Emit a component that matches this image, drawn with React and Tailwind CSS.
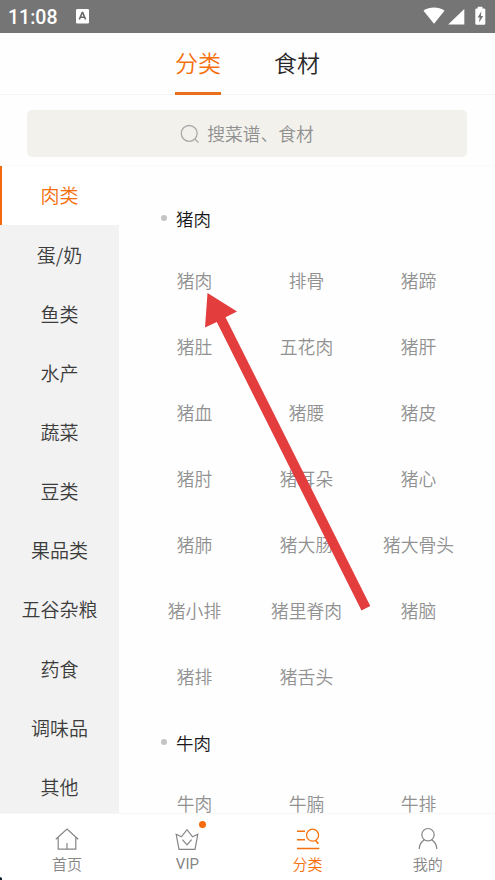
const CATEGORIES = ['肉类', '蛋/奶', '鱼类', '水产', '蔬菜', '豆类', '果品类', '五谷杂粮', '药食', '调味品', '其他'];

const SECTIONS = [
  {
    title: '猪肉',
    items: ['猪肉', '排骨', '猪蹄', '猪肚', '五花肉', '猪肝', '猪血', '猪腰', '猪皮', '猪肘', '猪耳朵', '猪心', '猪肺', '猪大肠', '猪大骨头', '猪小排', '猪里脊肉', '猪脑', '猪排', '猪舌头'],
  },
  { title: '牛肉', items: ['牛肉', '牛腩', '牛排'] },
];

function StatusBar() {
  return (
    <header className="flex h-[33px] shrink-0 items-center bg-[#757575] pl-[8px] pr-[8px] text-white">
      <span className="w-[68px] pt-[2px] font-[Roboto] text-[19.5px] font-medium leading-none">11:08</span>
      <svg width="13" height="15" viewBox="0 0 13 15">
        <rect width="13" height="14.5" rx="1.2" fill="white" />
        <path d="M3.3 10.5 6.2 3.5h.5l2.9 7M4.4 8.3h4.2" fill="none" stroke="#666" strokeWidth="1.6" />
      </svg>
      <svg className="-mt-[1px] ml-auto" width="64" height="20" viewBox="0 0 64 20">
        <path d="M.5 4.7C6.5.4 15.5.4 21.5 4.7L11 17.7Z" fill="white" />
        <path d="M41.3 3v15.5H25.2Z" fill="white" />
        <path d="M54.7 2.4V.8h4.8v1.6h1.6q1.2 0 1.2 1.2v14q0 1.2-1.2 1.2h-7.6q-1.2 0-1.2-1.2v-14q0-1.2 1.2-1.2Z" fill="white" />
        <path d="M58.4 5.3 54.6 11.5h2.1l-.7 5 4.2-6.6h-2.3Z" fill="#757575" />
      </svg>
    </header>
  );
}

function Tabs() {
  return (
    <nav className="flex h-[62px] shrink-0 justify-center gap-[53px] border-b border-[#f4f4f4] text-[23px] leading-none text-[#282828]">
      <button className="-mb-px flex h-[62px] w-[46px] items-center justify-center border-b-[3px] border-[#e9701a] pb-px whitespace-nowrap text-[#f5700c]">分类</button>
      <button className="-mb-px flex h-[62px] w-[46px] items-center justify-center border-b-[3px] border-transparent pb-px whitespace-nowrap">食材</button>
    </nav>
  );
}

function Search() {
  return (
    <div className="flex h-[71px] shrink-0 items-start border-b border-[#fafafa] px-[27px] pt-[15px]">
      <div className="flex h-[47px] w-[440px] items-center justify-center gap-[7px] rounded-[5px] bg-[#f2f1ec] text-[17.8px] leading-none text-[#8f8f8f]">
        <svg width="20" height="20" viewBox="0 0 20 20" fill="none" stroke="#aaa" strokeWidth="1.3">
          <circle cx="9.2" cy="9.4" r="7.9" />
          <path d="m15 15.2 3.5 3.2" />
        </svg>
        <span>搜菜谱、食材</span>
      </div>
    </div>
  );
}

function Sidebar() {
  return (
    <aside className="flex w-[119px] shrink-0 flex-col bg-[#f2f2f2] text-[19px] leading-none">
      {CATEGORIES.map((name, i) => (
        <div
          key={name}
          className={
            i === 0
              ? 'flex h-[59.15px] shrink-0 items-center justify-center border-l-2 border-[#f56a0c] bg-white pb-[1.4px] pr-[2px] text-[#f5700c]'
              : 'flex h-[59.15px] shrink-0 items-center justify-center pb-[1.4px] text-[#3c3c3c]'
          }
        >
          {name}
        </div>
      ))}
    </aside>
  );
}

function Section({ title, items }) {
  return (
    <section>
      <h2 className="flex h-[61.5px] items-center gap-[9.5px] pl-[22px] pt-[3px] text-[17.5px] leading-none text-[#181818]">
        <span className="-mt-[1px] size-[6px] rounded-full bg-[#c4c4c4]" />
        {title}
      </h2>
      <div className="grid grid-cols-3 text-[17.8px] leading-none text-[#919191]">
        {items.map((item) => (
          <div key={item} className="flex h-[66px] items-center justify-center whitespace-nowrap pb-px">{item}</div>
        ))}
      </div>
    </section>
  );
}

function NavItem({ label, active, dot, children }) {
  return (
    <button className={active ? 'flex flex-1 flex-col items-center pt-[12px] text-[#f5700c]' : 'flex flex-1 flex-col items-center pt-[12px] text-[#858585]'}>
      <span className="relative">
        <svg width="26" height="26" viewBox="0 0 26 26" fill="none" stroke="currentColor" strokeWidth="1.2">{children}</svg>
        {dot && <i className="absolute -top-[5px] left-[25px] size-[7px] rounded-full bg-[#f56a0c]" />}
      </span>
      <span className={dot ? 'mt-[5px] font-[Roboto] text-[15px] font-normal leading-[15px]' : 'mt-[4px] text-[15px] leading-[15px]'}>{label}</span>
    </button>
  );
}

function BottomNav() {
  return (
    <nav className="flex h-[67px] shrink-0 border-t border-[#f7f7f7] bg-white px-[7px]">
      <NavItem label="首页">
        <path d="M1.8 13.2 13 3l11.2 10.2M4.2 11.2v12h17.6v-12M13 17v6" />
      </NavItem>
      <NavItem label="VIP" dot>
        <path d="m2.2 8.3 5.2 2.5L13 3.7l5.6 7.1 5.2-2.5-2.8 15H5ZM8.4 13.6l4.6 5.2 4.6-5.2" />
      </NavItem>
      <NavItem label="分类" active>
        <path d="M2 5.2h8M2 13.7h8M2 22.5h22.3" strokeWidth="1.4" />
        <circle cx="17.6" cy="9.2" r="6" />
        <path d="m20.7 14.5 2.7 3.3" strokeWidth="1.6" />
      </NavItem>
      <NavItem label="我的">
        <circle cx="13" cy="8.7" r="6.2" />
        <path d="M4.2 23c.2-4.3 2.1-7.4 5.2-9.1M16.6 13.9c3.1 1.7 5 4.8 5.2 9.1" />
      </NavItem>
    </nav>
  );
}

export default function App() {
  return (
    <div className="relative flex h-[880px] w-[495px] flex-col overflow-hidden bg-[#fefefe] font-['Noto_Sans_CJK_SC',sans-serif] font-[350]">
      <StatusBar />
      <Tabs />
      <Search />
      <main className="flex min-h-0 flex-1 overflow-hidden">
        <Sidebar />
        <div className="flex-1 overflow-hidden pl-[19.5px] pr-[20.5px] pt-[20.5px]">
          {SECTIONS.map((section) => (
            <Section key={section.title} {...section} />
          ))}
        </div>
      </main>
      <BottomNav />
      <svg className="pointer-events-none absolute left-[200px] top-[288px]" width="175" height="326" viewBox="200 288 175 326">
        <path d="M207.5 293 237 311.5 225.5 317.3 370.3 606 361.5 610.5 216.8 322 205 327.5Z" fill="#e33d3d" />
      </svg>
      <svg className="pointer-events-none absolute bottom-0 left-0" width="3" height="4" viewBox="0 0 3 4">
        <path d="M0 1 2 2v2H0Z" fill="#10202b" />
      </svg>
    </div>
  );
}
